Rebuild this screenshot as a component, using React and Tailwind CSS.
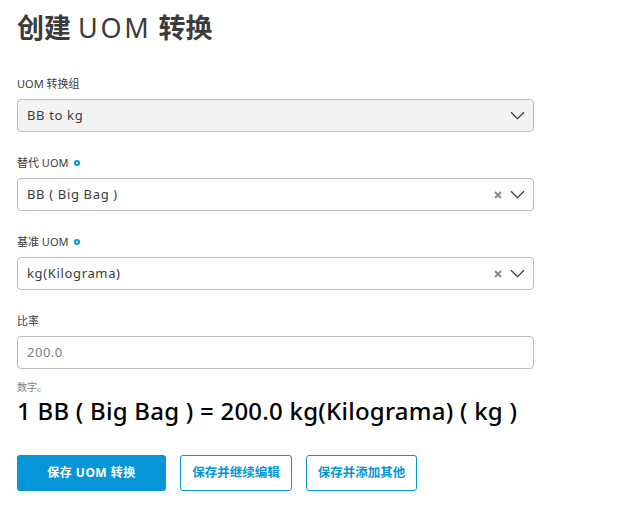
import React from 'react';

const font = { fontFamily: '"Noto Sans", "Noto Sans CJK SC", sans-serif' };

const Chevron = () => (
  <svg width="15" height="9" viewBox="0 0 15 9" fill="none" className="shrink-0">
    <path d="M1 1.2 L7.5 7.6 L14 1.2" stroke="#3c3c3c" strokeWidth="1.3" />
  </svg>
);

const Clear = () => (
  <svg width="8" height="8" viewBox="0 0 8 8" className="shrink-0">
    <path d="M1 1 L7 7 M7 1 L1 7" stroke="#8a8a8a" strokeWidth="2" />
  </svg>
);

const Required = () => (
  <span className="ml-[6px] inline-block w-[6px] h-[6px] rounded-full border-[2px] border-[#0696d7]" />
);

// one labelled field
const Field = ({ label, required, first, children }) => (
  <div className={first ? '' : 'mt-[23px]'}>
    <div className="flex items-center h-4 mb-[7px] text-[11px] text-[#3c3c3c]">
      {label}
      {required && <Required />}
    </div>
    {children}
  </div>
);

const SelectBox = ({ value, disabled, clearable }) => (
  <div
    className={`flex items-center h-[33px] w-[517px] pl-[9px] pr-[8px] rounded-[4px] border border-[#bdbdbd] ${
      disabled ? 'bg-[#f3f3f3]' : 'bg-white'
    }`}
  >
    <span className="flex-1 text-[13px] tracking-[0.05em] text-[#3c3c3c]">{value}</span>
    {clearable && (
      <span className="mr-[8px] flex items-center">
        <Clear />
      </span>
    )}
    <Chevron />
  </div>
);

export default function App() {
  return (
    <div className="min-h-screen bg-white pl-[17px] pt-[12px]" style={font}>
      <h1 className="text-[27px] leading-[32px] font-bold text-[#3c3c3c]">
        创建 <span className="font-normal tracking-[0.1em]">UOM</span> 转换
      </h1>

      <div className="mt-[32px]">
        <Field label="UOM 转换组" first>
          <SelectBox value="BB to kg" disabled />
        </Field>
        <Field label="替代 UOM" required>
          <SelectBox value="BB ( Big Bag )" clearable />
        </Field>
        <Field label="基准 UOM" required>
          <SelectBox value="kg(Kilograma)" clearable />
        </Field>
        <Field label="比率">
          <div className="flex items-center h-[33px] w-[517px] pl-[9px] rounded-[4px] border border-[#bdbdbd] bg-white">
            <span className="text-[13px] tracking-[0.04em] text-[#808080]">200.0</span>
          </div>
        </Field>
      </div>

      <div className="mt-[11px] text-[10px] leading-[14px] text-[#808080]">数字。</div>
      <div className="mt-[2px] text-[24px] leading-[29px] font-medium text-black tracking-[0.01em]">
        1 BB ( Big Bag ) = 200.0 kg(Kilograma) ( kg )
      </div>

      <div className="mt-[30px] flex gap-[14px]">
        <button className="h-[36px] w-[149px] rounded-[3px] bg-[#0696d7] text-white text-[12px] font-bold tracking-[0.04em]">
          保存 UOM 转换
        </button>
        <button className="h-[36px] w-[112px] rounded-[3px] border border-[#0696d7] bg-white text-[#0696d7] text-[12.5px] font-bold">
          保存并继续编辑
        </button>
        <button className="h-[36px] w-[111px] rounded-[3px] border border-[#0696d7] bg-white text-[#0696d7] text-[12.5px] font-bold">
          保存并添加其他
        </button>
      </div>
    </div>
  );
}
